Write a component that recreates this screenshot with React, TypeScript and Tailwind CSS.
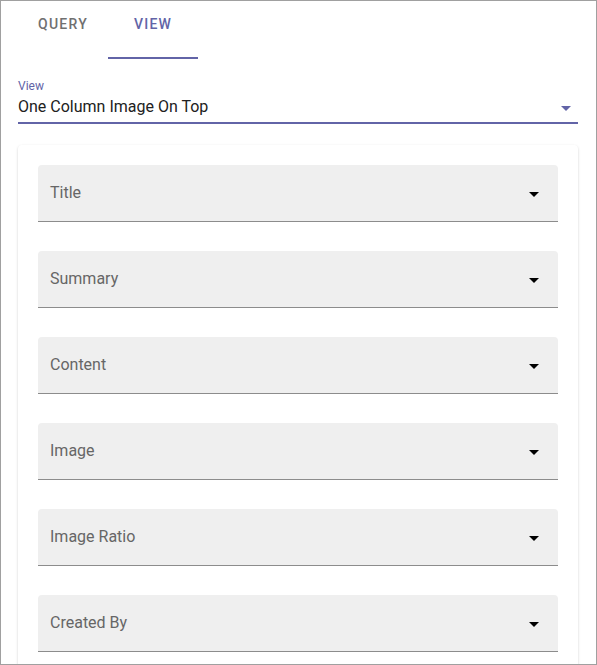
import React from 'react';

const fields = ['Title', 'Summary', 'Content', 'Image', 'Image Ratio', 'Created By'];

const Caret: React.FC<{ className?: string }> = ({ className }) => (
  <svg width="10" height="5" viewBox="0 0 10 5" className={className}>
    <path d="M0 0l5 5 5-5z" fill="currentColor" />
  </svg>
);

const App: React.FC = () => {
  return (
    <div className="w-[597px] h-[665px] overflow-hidden border border-[#a0a0a0] bg-white pl-[17px] pr-[18px] font-['Roboto',sans-serif]">
      {/* Tabs */}
      <div className="flex h-[58px]">
        <div className="w-[90px] flex justify-center pt-[13px] border-b-2 border-transparent">
          <span className="text-[14px] leading-[20px] font-medium tracking-[1.25px] text-[#707070]">QUERY</span>
        </div>
        <div className="w-[90px] flex justify-center pt-[13px] border-b-2 border-[#6264a7]">
          <span className="text-[14px] leading-[20px] font-medium tracking-[1.25px] text-[#6264a7]">VIEW</span>
        </div>
      </div>

      {/* View select */}
      <div className="mt-[20px] border-b-2 border-[#6264a7] pb-[4px]">
        <div className="text-[12px] leading-[14px] text-[#6264a7]">View</div>
        <div className="mt-[3px] flex items-center justify-between pr-[7px]">
          <span className="text-[16px] leading-[22px] text-[#212121]">One Column Image On Top</span>
          <Caret className="mt-[3px] text-[#6264a7]" />
        </div>
      </div>

      {/* Fields card */}
      <div className="mt-[21px] rounded-[4px] bg-white p-[20px] shadow-[0_1px_3px_rgba(0,0,0,0.12),0_1px_2px_rgba(0,0,0,0.08)]">
        <div className="flex flex-col gap-[29px]">
          {fields.map((f) => (
            <div
              key={f}
              className="h-[57px] flex items-center justify-between rounded-t-[4px] bg-[#efefef] border-b border-[#8c8c8c] pl-[12px] pr-[19px]"
            >
              <span className="text-[16px] leading-[20px] text-[#666666]">{f}</span>
              <Caret className="mt-[3px] text-black" />
            </div>
          ))}
        </div>
      </div>
    </div>
  );
};

export default App;
